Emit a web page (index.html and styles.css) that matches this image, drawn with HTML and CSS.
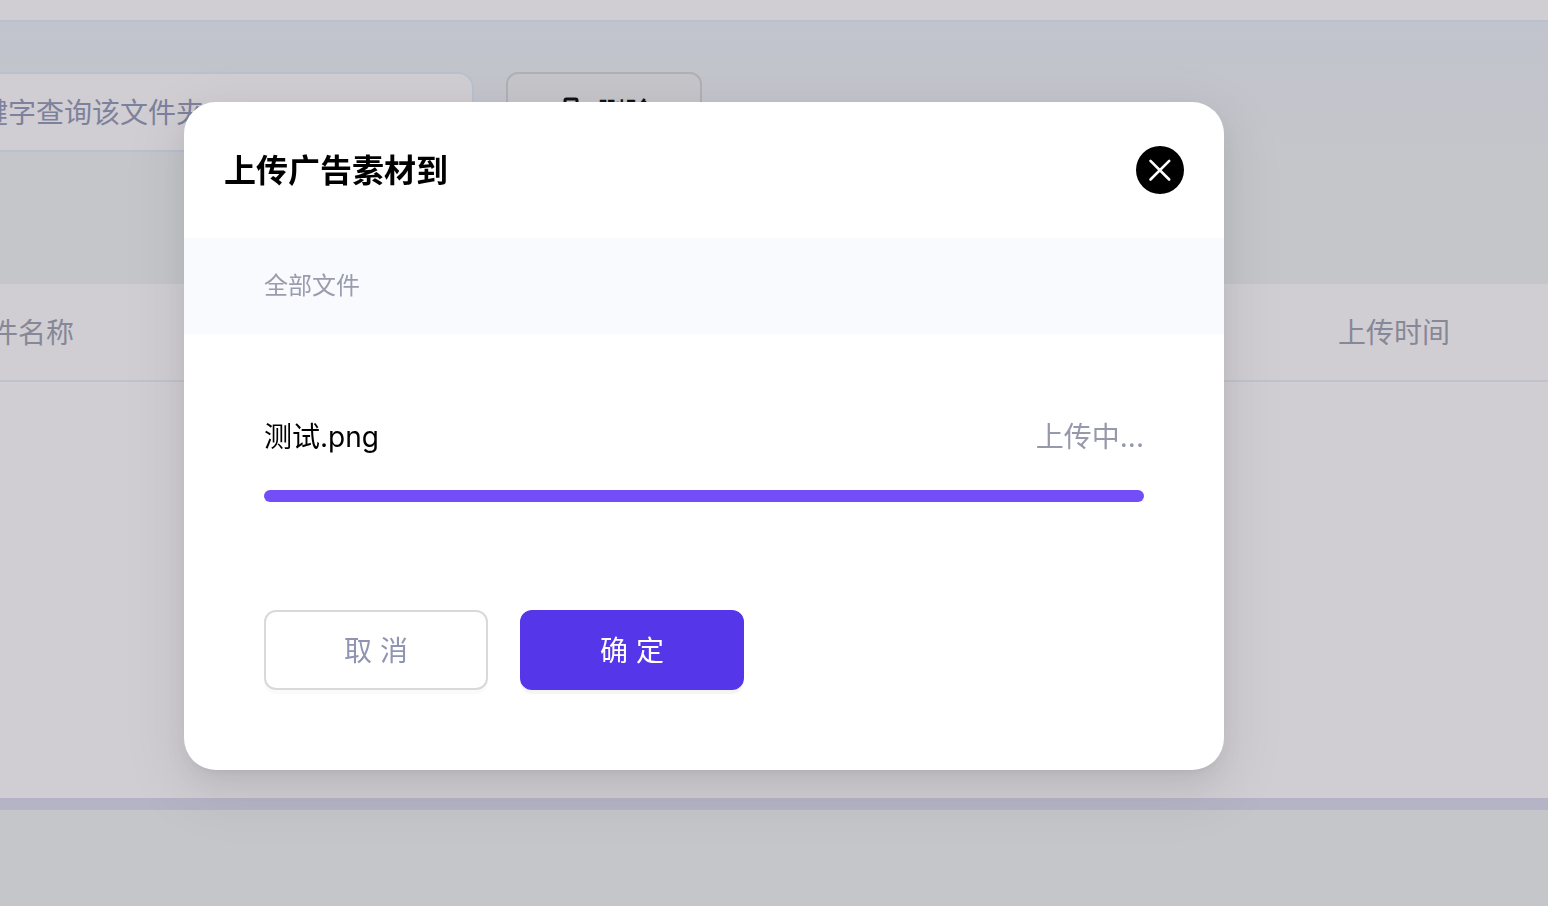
FILE: index.html
```html
<!DOCTYPE html>
<html lang="zh-CN">
<head>
    <meta charset="UTF-8">
    <meta name="viewport" content="width=device-width, initial-scale=1.0">
    <title>上传广告素材</title>
    <link rel="stylesheet" href="styles.css">
</head>
<body>
    <div class="page">
        <header class="topbar"></header>
        <div class="toolbar">
            <input class="search" type="text" aria-label="搜索" placeholder="键字查询该文件夹">
            <button class="delete" type="button">
                <svg width="28" height="32" viewBox="0 0 28 32" fill="none" stroke="currentColor" stroke-width="3" stroke-linejoin="round">
                    <path d="M8 9V3.5Q8 2 9.500 2H18.500Q20 2 20 3.500V9M2 9H26M5 9V30H23V9M11 15V23M17 15V23"/>
                </svg>
                <span>删除</span>
            </button>
        </div>
        <main class="files">
            <table>
                <thead>
                    <tr>
                        <th>件名称</th>
                        <th class="time">上传时间</th>
                    </tr>
                </thead>
            </table>
        </main>
    </div>

    <div class="modal-wrap">
        <div class="modal" role="dialog" aria-labelledby="modal-title">
            <div class="modal-header">
                <h2 id="modal-title">上传广告素材到</h2>
                <button class="close" type="button" aria-label="关闭">
                    <svg width="48" height="48" viewBox="0 0 48 48">
                        <circle cx="24" cy="24" r="24" fill="#000"/>
                        <path d="M14.5 14.8L33.2 33.5M33.2 14.8L14.5 33.5" stroke="#fff" stroke-width="2.6" stroke-linecap="round"/>
                    </svg>
                </button>
            </div>
            <div class="folder">全部文件</div>
            <div class="modal-body">
                <div class="file-row">
                    <label for="upload">测试.png</label>
                    <span class="status">上传中...</span>
                </div>
                <progress id="upload" value="100" max="100"></progress>
                <div class="buttons">
                    <button class="btn" type="button">取 消</button>
                    <button class="btn primary" type="button">确 定</button>
                </div>
            </div>
        </div>
    </div>
</body>
</html>
```
FILE: styles.css
```css
* {
    box-sizing: border-box;
}

body {
    margin: 0;
    min-height: 100vh;
    overflow: hidden;
    background: #c5c6ca;
    font-family: Inter, "Noto Sans CJK SC", sans-serif;
    font-size: 28px;
    line-height: 44px;
}

button,
input {
    font: inherit;
}

button {
    cursor: pointer;
}

/* page behind the dialog, scrolled a little to the right */
.page {
    margin-left: -20px;
}

.topbar {
    height: 22px;
    background: #d0ced3;
    border-bottom: 2px solid #b9c0ce;
}

.toolbar {
    display: flex;
    gap: 32px;
    padding: 50px 0 132px;
    background: linear-gradient(#c1c4ce, #c3c4cc 60px, #c5c6ca 130px);
}

.search {
    width: 494px;
    height: 80px;
    padding: 2px 0 0;
    border: 2px solid #b8c0d1;
    border-left: 0;
    border-radius: 0 16px 16px 0;
    background: #d0ced3;
}

.search::placeholder {
    color: #7d819c;
    opacity: 1;
}

.delete {
    display: flex;
    align-items: center;
    justify-content: center;
    gap: 12px;
    width: 196px;
    height: 80px;
    padding: 2px 0 0 2px;
    border: 2px solid #b0b1b4;
    border-radius: 12px;
    background: #c6c6ca;
    color: #111;
    font-weight: 500;
}

.files {
    min-height: 526px;
    background: #d0ced3;
    border-bottom: 12px solid #b4b4c6;
}

table {
    width: 100%;
    border-collapse: separate;
    border-spacing: 0;
}

th {
    height: 98px;
    padding: 2px 0 0 10px;
    border-bottom: 2px solid #c0c3cc;
    color: #868897;
    font-weight: 400;
    text-align: left;
}

.time {
    width: 210px;
    padding-left: 0;
}

.modal-wrap {
    position: fixed;
    inset: 0;
    padding: 102px 184px;
}

.modal {
    max-width: 1040px;
    border-radius: 32px;
    background: #fff;
    box-shadow: 0 12px 32px rgba(0, 0, 0, 0.08), 0 6px 12px -8px rgba(0, 0, 0, 0.12), 0 18px 56px 16px rgba(0, 0, 0, 0.05);
}

.modal-header {
    display: flex;
    align-items: center;
    justify-content: space-between;
    padding: 44px 40px;
}

h2 {
    margin: 0;
    padding-top: 2px;
    font-size: 32px;
    font-weight: 600;
}

.close {
    width: 48px;
    height: 48px;
    padding: 0;
    border: 0;
    border-radius: 50%;
    background: none;
}

.close svg {
    display: block;
}

.folder {
    padding: 26px 80px;
    background: #f9fafe;
    color: #999cac;
    font-size: 24px;
}

.modal-body {
    padding: 80px;
}

.file-row {
    display: flex;
    justify-content: space-between;
    line-height: 46px;
}

.status {
    color: #9699aa;
}

progress {
    display: block;
    width: 100%;
    height: 12px;
    margin: 30px 0 108px;
    border: 0;
    border-radius: 6px;
    overflow: hidden;
    appearance: none;
}

progress::-webkit-progress-bar {
    background: #f0f0f5;
}

progress::-webkit-progress-value {
    background: #734df8;
}

progress::-moz-progress-bar {
    background: #734df8;
}

.buttons {
    display: flex;
    gap: 32px;
}

.btn {
    width: 224px;
    height: 80px;
    padding: 2px 0 0;
    border: 2px solid #d9d9d9;
    border-radius: 12px;
    background: #fff;
    color: #8f94b3;
    box-shadow: 0 4px 0 rgba(0, 0, 0, 0.02);
}

.primary {
    border-color: #5536e8;
    background: #5536e8;
    color: #fff;
    box-shadow: 0 4px 0 rgba(0, 0, 0, 0.04);
}
```
